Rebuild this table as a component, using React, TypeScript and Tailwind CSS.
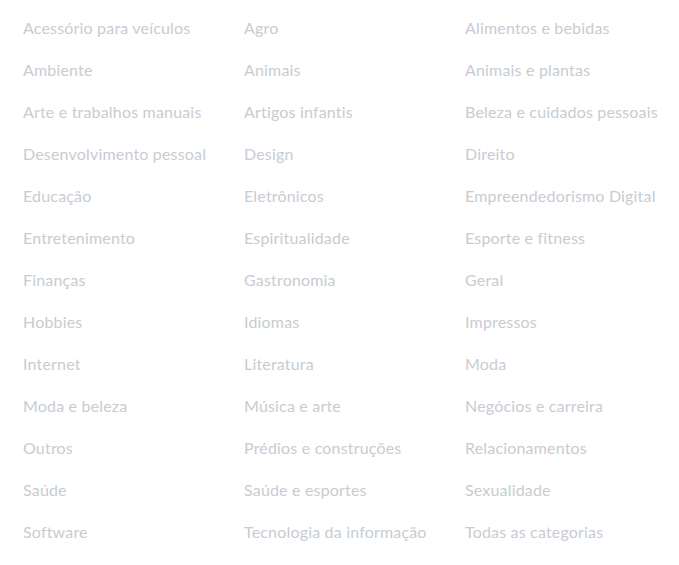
import React from "react";

const items = [
  "Acessório para veículos", "Agro", "Alimentos e bebidas",
  "Ambiente", "Animais", "Animais e plantas",
  "Arte e trabalhos manuais", "Artigos infantis", "Beleza e cuidados pessoais",
  "Desenvolvimento pessoal", "Design", "Direito",
  "Educação", "Eletrônicos", "Empreendedorismo Digital",
  "Entretenimento", "Espiritualidade", "Esporte e fitness",
  "Finanças", "Gastronomia", "Geral",
  "Hobbies", "Idiomas", "Impressos",
  "Internet", "Literatura", "Moda",
  "Moda e beleza", "Música e arte", "Negócios e carreira",
  "Outros", "Prédios e construções", "Relacionamentos",
  "Saúde", "Saúde e esportes", "Sexualidade",
  "Software", "Tecnologia da informação", "Todas as categorias",
];

export default function App() {
  return (
    <div className="w-[679px] h-[565px] bg-white pt-[7px] px-[23px]" style={{ fontFamily: "Lato, 'Noto Sans', sans-serif" }}>
      <div className="grid grid-cols-[221px_221px_1fr]">
        {items.map((t) => (
          <div key={t} className="h-[42px] flex items-center text-[16px] tracking-[0.18px] text-[#c8ccd2] whitespace-nowrap">
            {t}
          </div>
        ))}
      </div>
    </div>
  );
}
